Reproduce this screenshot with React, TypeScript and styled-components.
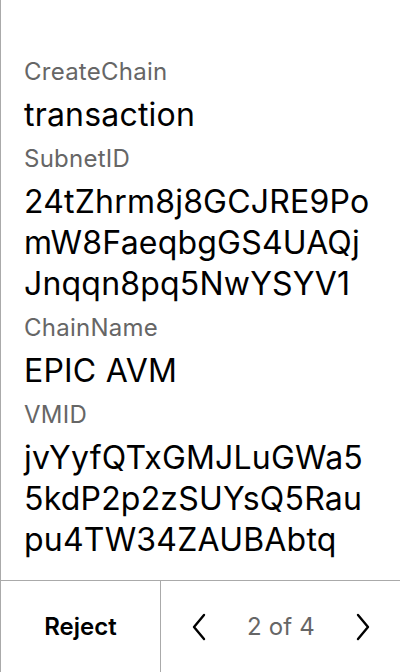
import React from 'react';
import styled, { createGlobalStyle } from 'styled-components';

const GlobalStyle = createGlobalStyle`
  html, body {
    margin: 0;
    padding: 0;
    background: #ffffff;
  }
  body {
    font-family: Inter, "Noto Sans", sans-serif;
    color: #000000;
  }
`;

const Screen = styled.div`
  width: 400px;
  height: 672px;
  box-sizing: border-box;
  border-left: 1px solid #aaaaaa;
  display: flex;
  flex-direction: column;
  background: #ffffff;
`;

const Content = styled.div`
  flex: 1;
  overflow: hidden;
  padding: 57px 24px 0 23px;
`;

const Field = styled.div`
  display: flex;
  flex-direction: column;
`;

const Label = styled.div`
  font-size: 24px;
  line-height: 30px;
  letter-spacing: 0.25px;
  color: #666666;
  margin-bottom: 7px;
`;

const Value = styled.div`
  font-size: 32px;
  line-height: 41px;
  letter-spacing: 0.2px;
  color: #000000;
  word-break: break-all;
  margin-bottom: 9px;
`;

const Footer = styled.div`
  height: 92px;
  box-sizing: border-box;
  border-top: 1px solid #aaaaaa;
  display: flex;
`;

const RejectButton = styled.button`
  width: 160px;
  border: none;
  border-right: 1px solid #aaaaaa;
  background: transparent;
  font-family: Inter, "Noto Sans", sans-serif;
  font-size: 24px;
  font-weight: 600;
  color: #000000;
  padding: 0;
`;

const Pager = styled.div`
  flex: 1;
  display: flex;
  align-items: center;
  justify-content: space-between;
  padding: 0 25px 0 26px;
`;

const ArrowButton = styled.button`
  border: none;
  background: transparent;
  padding: 0;
  width: 24px;
  height: 30px;
  display: flex;
  align-items: center;
  justify-content: center;
`;

const PageCount = styled.span`
  font-size: 24px;
  letter-spacing: 0.2px;
  color: #666666;
`;

const Chevron = ({ dir }: { dir: 'left' | 'right' }) => (
  <svg width="16" height="28" viewBox="0 0 16 28" fill="none">
    <path
      d={dir === 'left' ? 'M13 2 L3 14 L13 26' : 'M3 2 L13 14 L3 26'}
      stroke="#000"
      strokeWidth="2.4"
      strokeLinecap="round"
      strokeLinejoin="round"
    />
  </svg>
);

const fields = [
  { label: 'CreateChain', value: 'transaction' },
  { label: 'SubnetID', value: '24tZhrm8j8GCJRE9PomW8FaeqbgGS4UAQjJnqqn8pq5NwYSYV1' },
  { label: 'ChainName', value: 'EPIC AVM' },
  { label: 'VMID', value: 'jvYyfQTxGMJLuGWa55kdP2p2zSUYsQ5Raupu4TW34ZAUBAbtq' },
];

const App = () => {
  return (
    <>
      <GlobalStyle />
      <Screen>
        <Content>
          {fields.map((field) => (
            <Field key={field.label}>
              <Label>{field.label}</Label>
              <Value>{field.value}</Value>
            </Field>
          ))}
        </Content>
        <Footer>
          <RejectButton>Reject</RejectButton>
          <Pager>
            <ArrowButton>
              <Chevron dir="left" />
            </ArrowButton>
            <PageCount>2 of 4</PageCount>
            <ArrowButton>
              <Chevron dir="right" />
            </ArrowButton>
          </Pager>
        </Footer>
      </Screen>
    </>
  );
};

export default App;
